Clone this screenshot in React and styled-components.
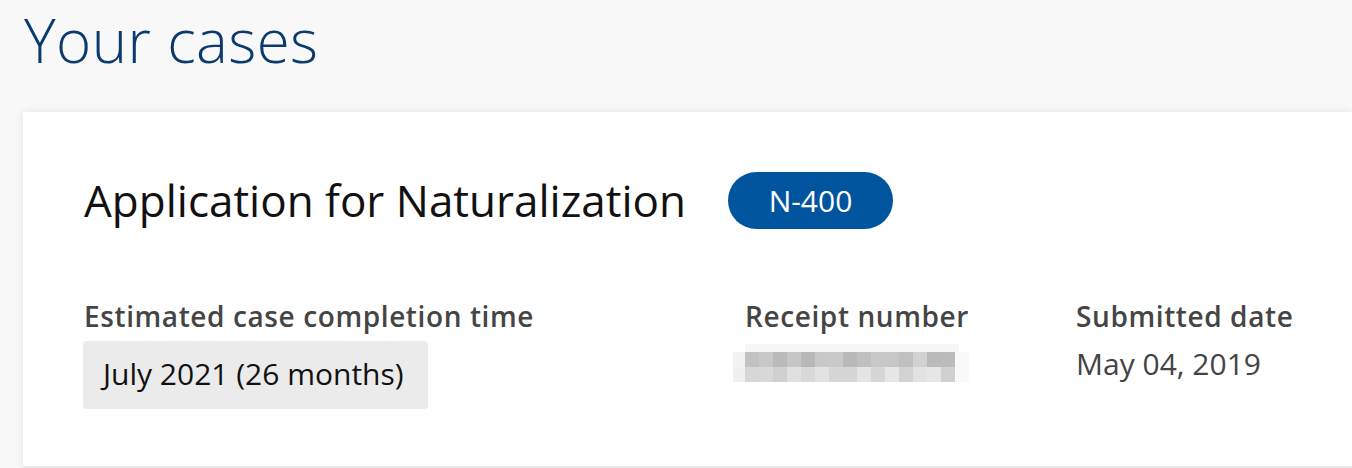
import React from "react"
import styled, { createGlobalStyle } from "styled-components"

const GlobalStyle = createGlobalStyle`
  html, body {
    margin: 0;
    padding: 0;
    background: #f8f8f8;
    font-family: "Open Sans", Lato, sans-serif;
    overflow: hidden;
  }
`

const Page = styled.main`
  display: flex;
  flex-direction: column;
  width: 1352px;
  height: 468px;
  overflow: hidden;
`

const PageTitle = styled.h1`
  margin: 0;
  padding: 4px 0 0 24px;
  height: 112px;
  flex: none;
  box-sizing: border-box;
  font-size: 60px;
  line-height: 72px;
  font-weight: 300;
  letter-spacing: 0.4px;
  color: #0b3a6e;
`

const Card = styled.section`
  flex: none;
  margin-left: 23px;
  background: #fff;
  box-shadow: 0 0 8px rgba(0, 0, 0, 0.09);
  padding: 60px 0 57px 61px;
  border-bottom: 1px solid #e4e4e4;
`

const CardHeader = styled.div`
  display: flex;
  align-items: center;
  gap: 42px;
`

const CaseTitle = styled.h2`
  margin: 0;
  font-size: 44px;
  font-weight: 400;
  color: #111;
  line-height: 57px;
`

const Badge = styled.span`
  display: inline-flex;
  align-items: center;
  justify-content: center;
  height: 57px;
  width: 165px;
  border-radius: 29px;
  background: #00559e;
  color: #fff;
  font-size: 30px;
  font-weight: 400;
`

const Details = styled.div`
  display: grid;
  grid-template-columns: 661px 331px 1fr;
  margin-top: 70px;
`

const Field = styled.div`
  display: flex;
  flex-direction: column;
  align-items: flex-start;
`

const Label = styled.div`
  font-size: 28px;
  line-height: 34px;
  font-weight: 600;
  letter-spacing: 0.6px;
  color: #454545;
`

const Chip = styled.div`
  margin-top: 8px;
  margin-left: -1px;
  padding: 16px 24px 18px 20px;
  background: #ebebeb;
  border-radius: 4px;
  font-size: 30px;
  line-height: 34px;
  color: #111;
`

const Value = styled.div`
  margin-top: 14px;
  font-size: 30px;
  line-height: 34px;
  color: #444;
`

const Redacted = styled.svg`
  display: block;
  margin-top: 11px;
  margin-left: -12px;
`

const topRow = ["f2", "c2", "c8", "ba", "c6", "b8", "c8", "c9", "b9", "c0", "c8", "c7", "c0", "d2", "ba", "bb", "f9"]
const lowRow = ["f0", "d6", "d8", "d0", "e0", "d8", "e2", "d6", "d6", "e4", "d6", "e6", "d2", "e2", "e6", "d0", "f9"]

const ReceiptBlur = () => (
  <Redacted width="240" height="38" viewBox="0 0 240 38">
    <rect x="12" y="0" width="214" height="8" fill="#f6f6f6" />
    {topRow.map((c, i) => (
      <rect key={"t" + i} x={i === 0 ? 0 : 12 + (i - 1) * 14} y="8" width={i === 0 ? 12 : 14} height="15" fill={"#" + c + c + c} />
    ))}
    {lowRow.map((c, i) => (
      <rect key={"b" + i} x={i === 0 ? 0 : 12 + (i - 1) * 14} y="23" width={i === 0 ? 12 : 14} height="15" fill={"#" + c + c + c} />
    ))}
  </Redacted>
)

const App = () => {
  return (
    <Page>
      <GlobalStyle />
      <PageTitle>Your cases</PageTitle>
      <Card>
        <CardHeader>
          <CaseTitle>Application for Naturalization</CaseTitle>
          <Badge>N-400</Badge>
        </CardHeader>
        <Details>
          <Field>
            <Label>Estimated case completion time</Label>
            <Chip>July 2021 (26 months)</Chip>
          </Field>
          <Field>
            <Label>Receipt number</Label>
            <ReceiptBlur />
          </Field>
          <Field>
            <Label>Submitted date</Label>
            <Value>May 04, 2019</Value>
          </Field>
        </Details>
      </Card>
    </Page>
  )
}

export default App
